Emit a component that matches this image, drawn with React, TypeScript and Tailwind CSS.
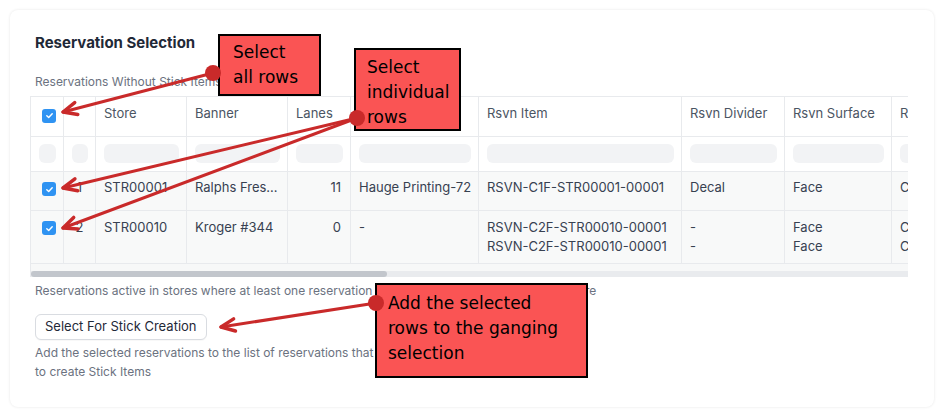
import React from "react";

const cols = [33, 32, 91, 101, 63, 128, 203, 103, 107, 130, 140];

function Check() {
  return (
    <span className="flex h-[14px] w-[14px] items-center justify-center rounded-[3px] bg-[#2f93f2]">
      <svg width="9" height="9" viewBox="0 0 10 10" fill="none">
        <path d="M2 5.2 L4.1 7.2 L8 3" stroke="white" strokeWidth="1.6" strokeLinecap="round" strokeLinejoin="round" />
      </svg>
    </span>
  );
}

function Cell({ w, children, className = "" }: { w: number; children?: React.ReactNode; className?: string }) {
  return (
    <div className={`shrink-0 border-r border-[#e8eaed] ${className}`} style={{ width: w }}>
      {children}
    </div>
  );
}

function head(x1: number, y1: number, x2: number, y2: number, len = 15, ang = 0.42) {
  const a = Math.atan2(y1 - y2, x1 - x2);
  const p1 = [x2 + len * Math.cos(a + ang), y2 + len * Math.sin(a + ang)];
  const p2 = [x2 + len * Math.cos(a - ang), y2 + len * Math.sin(a - ang)];
  return `M${p1[0]},${p1[1]} L${x2},${y2} L${p2[0]},${p2[1]}`;
}

const arrows = [
  [213, 73, 63, 112],
  [357, 118, 63, 188],
  [357, 118, 63, 228],
  [376, 303, 221, 327],
];

export default function App() {
  const headers = ["", "", "Store", "Banner", "Lanes", "", "Rsvn Item", "Rsvn Divider", "Rsvn Surface", "Rsvn Category", "Rsvn Status"];
  return (
    <div className="relative h-[417px] w-[944px] overflow-hidden bg-white p-[10px] font-['Inter','Noto_Sans',sans-serif]">
      <div className="h-full w-full rounded-lg bg-white pl-[20px] pr-[26px] pt-[23px] shadow-[0_0_3px_rgba(0,0,0,0.1)]">
        <h2 className="ml-[5px] text-[15px] font-bold leading-[20px] text-[#1f2937]">Reservation Selection</h2>
        <p className="ml-[5px] mt-[21px] text-[12px] leading-[16px] text-[#6b7280]">Reservations Without Stick Items</p>
        <div className="mt-[6px] w-[878px] overflow-hidden border-l border-t border-[#e8eaed] text-[13px] text-[#374151]">
          {/* header */}
          <div className="flex h-[40px] border-b border-[#e8eaed] bg-white">
            {cols.map((w, i) => (
              <Cell key={i} w={w} className="flex items-center px-2 pb-[5px] text-[#4b5563]">
                {i === 0 ? <span className="ml-[3px] mt-[3px]"><Check /></span> : <span className="whitespace-nowrap">{headers[i]}</span>}
              </Cell>
            ))}
          </div>
          {/* filter */}
          <div className="flex h-[35px] border-b border-[#e8eaed] bg-white">
            {cols.map((w, i) => (
              <Cell key={i} w={w} className="pl-2 pr-[7px] pt-[7px]">
                <div className="h-[19px] rounded-md bg-[#f2f3f5]" />
              </Cell>
            ))}
          </div>
          {/* row 1 */}
          <div className="flex h-[39px] border-b border-[#e8eaed] bg-[#f8f9f9] leading-[19px]">
            <Cell w={cols[0]} className="pl-[11px] pt-[10px]"><Check /></Cell>
            <Cell w={cols[1]} className="pt-[6px] text-center">1</Cell>
            <Cell w={cols[2]} className="px-2 pt-[6px]">STR00001</Cell>
            <Cell w={cols[3]} className="truncate px-2 pt-[6px]">Ralphs Fresh Fare</Cell>
            <Cell w={cols[4]} className="px-[9px] pt-[6px] text-right">11</Cell>
            <Cell w={cols[5]} className="whitespace-nowrap px-2 pt-[6px]">Hauge Printing-72</Cell>
            <Cell w={cols[6]} className="px-2 pt-[6px]">RSVN-C1F-STR00001-00001</Cell>
            <Cell w={cols[7]} className="px-2 pt-[6px]">Decal</Cell>
            <Cell w={cols[8]} className="px-2 pt-[6px]">Face</Cell>
            <Cell w={cols[9]} className="px-2 pt-[6px]">Cooler</Cell>
            <Cell w={cols[10]} className="px-2 pt-[6px]">Active</Cell>
          </div>
          {/* row 2 */}
          <div className="flex h-[53px] border-b border-[#e8eaed] bg-[#f8f9f9] leading-[19px]">
            <Cell w={cols[0]} className="pl-[11px] pt-[10px]"><Check /></Cell>
            <Cell w={cols[1]} className="pt-[7px] text-center">2</Cell>
            <Cell w={cols[2]} className="px-2 pt-[7px]">STR00010</Cell>
            <Cell w={cols[3]} className="truncate px-2 pt-[7px]">Kroger #344</Cell>
            <Cell w={cols[4]} className="px-[9px] pt-[7px] text-right">0</Cell>
            <Cell w={cols[5]} className="px-2 pt-[7px]">-</Cell>
            <Cell w={cols[6]} className="px-2 pt-[7px]">RSVN-C2F-STR00010-00001<br />RSVN-C2F-STR00010-00001</Cell>
            <Cell w={cols[7]} className="px-2 pt-[7px]">-<br />-</Cell>
            <Cell w={cols[8]} className="px-2 pt-[7px]">Face<br />Face</Cell>
            <Cell w={cols[9]} className="px-2 pt-[7px]">Cooler<br />Cooler</Cell>
            <Cell w={cols[10]} className="px-2 pt-[7px]">Active<br />Active</Cell>
          </div>
          <div className="h-[7px] bg-[#f7f8f8]" />
          <div className="h-[6px] bg-[#e9ebee]">
            <div className="h-full w-[356px] rounded-full bg-[#c2c6cc]" />
          </div>
        </div>
        <p className="ml-[5px] mt-[6px] whitespace-nowrap text-[12px] leading-[16px] text-[#6b7280]">
          Reservations active in stores where at least one reservation is selected for creation are shown here
        </p>
        <button className="ml-[5px] mt-[15px] h-[26px] rounded-md border border-[#d9dce1] bg-white px-[9px] text-[13px] text-[#1f2937] shadow-[0_1px_1px_rgba(0,0,0,0.03)]">
          Select For Stick Creation
        </button>
        <p className="ml-[5px] mt-[3px] text-[12px] leading-[19px] text-[#6b7280]">
          Add the selected reservations to the list of reservations that will be used
          <br />
          to create Stick Items
        </p>
      </div>

      {/* callouts */}
      <div className="absolute left-[218px] top-[34px] h-[62px] w-[103px] border-2 border-black bg-[#fa5454] pl-[13px] pt-[4px] font-['DejaVu_Sans',sans-serif] text-[17px] leading-[25px] text-black">
        Select<br />all rows
      </div>
      <div className="absolute left-[354px] top-[48px] h-[83px] w-[107px] border-2 border-black bg-[#fa5454] pl-[11px] pt-[5px] font-['DejaVu_Sans',sans-serif] text-[17px] leading-[25px] text-black">
        Select<br />individual<br />rows
      </div>
      <div className="absolute left-[375px] top-[283px] h-[95px] w-[213px] border-2 border-black bg-[#fa5454] pl-[11px] pt-[6px] font-['DejaVu_Sans',sans-serif] text-[17px] leading-[25px] text-black">
        Add the selected<br />rows to the ganging<br />selection
      </div>

      <svg className="pointer-events-none absolute left-0 top-0" width="944" height="417">
        {arrows.map(([x1, y1, x2, y2], i) => (
          <g key={i} stroke="#c92a2a" strokeWidth="3" fill="none" strokeLinecap="round" strokeLinejoin="round">
            <path d={`M${x1},${y1} L${x2},${y2}`} />
            <path d={head(x1, y1, x2, y2)} strokeWidth="3.5" />
          </g>
        ))}
        <circle cx="213" cy="73" r="8" fill="#c92a2a" />
        <circle cx="357" cy="118" r="8" fill="#c92a2a" />
        <circle cx="376" cy="303" r="8" fill="#c92a2a" />
      </svg>
    </div>
  );
}
